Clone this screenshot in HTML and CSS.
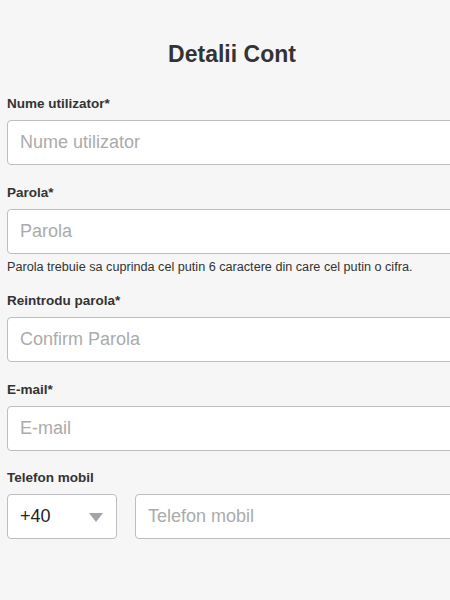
FILE: index.html
```html
<!DOCTYPE html>
<html lang="ro">
<head>
<meta charset="utf-8">
<title>Detalii Cont</title>
<link rel="stylesheet" href="styles.css">
</head>
<body>
<div class="page">
  <h1 class="title">Detalii Cont</h1>
  <div class="field">
    <label class="label">Nume utilizator*</label>
    <div class="input"><span class="ph">Nume utilizator</span></div>
  </div>
  <div class="field">
    <label class="label">Parola*</label>
    <div class="input"><span class="ph">Parola</span></div>
    <p class="hint">Parola trebuie sa cuprinda cel putin 6 caractere din care cel putin o cifra.</p>
  </div>
  <div class="field">
    <label class="label">Reintrodu parola*</label>
    <div class="input"><span class="ph">Confirm Parola</span></div>
  </div>
  <div class="field">
    <label class="label">E-mail*</label>
    <div class="input"><span class="ph">E-mail</span></div>
  </div>
  <div class="field">
    <label class="label">Telefon mobil</label>
    <div class="phone-row">
      <div class="input select"><span class="val">+40</span><span class="caret"></span></div>
      <div class="input grow"><span class="ph">Telefon mobil</span></div>
    </div>
  </div>
</div>
</body>
</html>
```
FILE: styles.css
```css
html, body {
  margin: 0;
  padding: 0;
  background: #f6f6f6;
  overflow: hidden;
  font-family: "Liberation Sans", Arial, sans-serif;
  color: #333;
}
.page {
  width: 450px;
  padding: 39.5px 0 0 7px;
}
.title {
  margin: 0 0 28.5px;
  font-size: 23px;
  line-height: 28px;
  font-weight: bold;
  text-align: center;
  color: #333;
}
.field {
  margin-bottom: 19.5px;
}
.label {
  display: block;
  font-size: 13.5px;
  line-height: 16px;
  font-weight: bold;
  color: #333;
  margin-bottom: 8px;
}
.input {
  box-sizing: border-box;
  height: 45px;
  background: #fff;
  border: 1px solid #bdbdc2;
  border-radius: 4px;
  display: flex;
  align-items: center;
  padding-left: 12px;
  font-size: 18px;
}
.ph {
  color: #ababab;
}
.hint {
  margin: 6px 0 0;
  font-size: 12.65px;
  line-height: 14px;
  color: #333;
  white-space: nowrap;
}
.phone-row {
  display: flex;
  gap: 18px;
}
.select {
  width: 110px;
  flex: none;
  justify-content: space-between;
  padding-right: 13px;
}
.val {
  color: #222;
}
.caret {
  width: 0;
  height: 0;
  border-left: 7.5px solid transparent;
  border-right: 7.5px solid transparent;
  border-top: 9px solid #a3a3ab;
  margin-top: 2px;
}
.grow {
  flex: 1;
}
```
